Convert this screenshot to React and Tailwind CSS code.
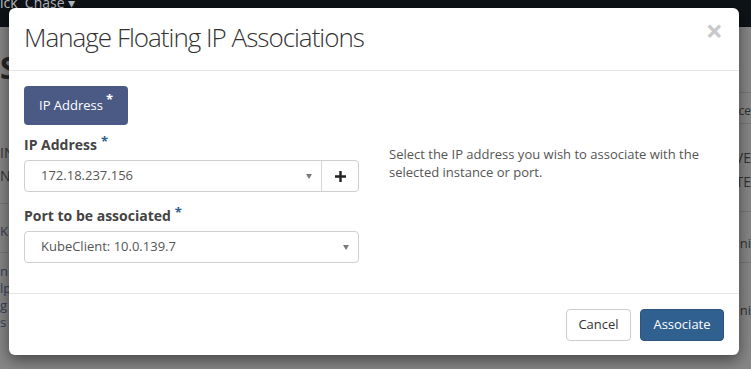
import React from "react";

const Req = ({ light }) => (
  <span
    className={`ml-[4px] inline-block align-top text-[13px] font-bold leading-[12px] ${
      light ? "text-white" : "text-[#2a5f8f]"
    }`}
  >
    *
  </span>
);

const Caret = () => (
  <svg width="6" height="5" viewBox="0 0 6 5" className="shrink-0">
    <path d="M0 0h6L3 5z" fill="#7a7a7a" />
  </svg>
);

const Select = ({ value, addon }) => (
  <div className="flex h-[32px] w-full rounded-[4px] border border-[#cfcfcf] bg-white">
    <div className="flex flex-1 items-center justify-between pl-[16px] pr-[9px] text-[13px] text-[#555]">
      <span>{value}</span>
      <Caret />
    </div>
    {addon && (
      <div className="flex w-[37px] items-center justify-center border-l border-[#d6d6d6]">
        <svg width="11" height="11" viewBox="0 0 11 11">
          <path d="M4.3 0h2.4v4.3H11v2.4H6.7V11H4.3V6.7H0V4.3h4.3z" fill="#222" />
        </svg>
      </div>
    )}
  </div>
);

const Field = ({ label, children, className = "" }) => (
  <div className={className}>
    <div className="mb-[5px] h-[20px] text-[14px] font-bold leading-[20px] text-[#444]">
      {label}
      <Req />
    </div>
    {children}
  </div>
);

const App = () => {
  return (
    <div className="relative h-[369px] w-[751px] overflow-hidden bg-[#878787] font-['Open_Sans',sans-serif]">
      {/* page behind the backdrop */}
      <div className="flex h-[27px] items-start bg-[#0e1317] text-[14px] leading-[12px] text-[#b8bcc2]">
        <span className="-mt-[3px]">ick&nbsp; Chase ▾</span>
      </div>
      <div className="flex h-[342px] justify-between text-[#2e2e33]">
        <div className="w-[9px] overflow-hidden whitespace-nowrap">
          <div className="mt-[26px] text-[30px] font-bold leading-[30px] text-[#262626]">S</div>
          <div className="mt-[58px] text-[14px] leading-[23px] text-[#333]">IN</div>
          <div className="text-[14px] leading-[23px] text-[#333]">N</div>
          <div className="mt-[16px] border-t border-[#777]" />
          <div className="mt-[18px] text-[13px] leading-[18px] text-[#34405a]">K</div>
          <div className="mt-[12px] border-t border-[#777]" />
          <div className="mt-[10px] text-[13px] leading-[17px] text-[#34405a]">n</div>
          <div className="text-[13px] leading-[17px] text-[#34405a]">lp</div>
          <div className="text-[13px] leading-[17px] text-[#34405a]">g</div>
          <div className="text-[13px] leading-[17px] text-[#34405a]">s</div>
        </div>
        <div className="flex w-[12px] flex-col items-end overflow-hidden whitespace-nowrap">
          <div className="mt-[65px] w-full border-t border-[#777]" />
          <div className="mt-[9px] text-[12px] leading-[18px] text-[#333]">nce</div>
          <div className="mt-[3px] w-full border-t border-[#777]" />
          <div className="mt-[22px] text-[14px] leading-[24px] text-[#333]">VE</div>
          <div className="text-[14px] leading-[24px] text-[#333]">TE</div>
          <div className="mt-[17px] w-full border-t border-[#777]" />
          <div className="mt-[22px] text-[13px] leading-[18px] text-[#333]">ni</div>
          <div className="mt-[10px] w-full border-t border-[#777]" />
          <div className="mt-[38px] text-[13px] leading-[18px] text-[#333]">ni</div>
        </div>
      </div>

      {/* modal dialog */}
      <div className="absolute left-[9px] top-[8px] flex h-[347px] w-[730px] flex-col rounded-[6px] bg-white shadow-[0_5px_15px_rgba(0,0,0,0.5)]">
        <div className="flex h-[63px] items-center justify-between border-b border-[#e5e5e5] px-[15px]">
          <h4 className="-mt-[3px] text-[26px] font-light tracking-[-1px] text-[#333]">
            Manage Floating IP Associations
          </h4>
          <span className="-mt-[17px] mr-[1px] text-[30px] font-bold leading-none text-[#c8c8c8]">
            ×
          </span>
        </div>

        <div className="flex-1 px-[15px] pt-[15px]">
          <div className="inline-flex h-[39px] w-[104px] items-center rounded-[4px] bg-[#4a5a85] pl-[15px] text-[13px] text-white">
            IP Address
            <span className="-mt-[12px] ml-[3px] text-[13px] font-bold leading-none">*</span>
          </div>

          <div className="mt-[10px] grid grid-cols-2 gap-[30px]">
            <div>
              <Field label="IP Address">
                <Select value="172.18.237.156" addon />
              </Field>
              <Field label="Port to be associated" className="mt-[14px]">
                <Select value="KubeClient: 10.0.139.7" />
              </Field>
            </div>
            <p className="mt-[10px] text-[13px] leading-[18px] text-[#555]">
              Select the IP address you wish to associate with the selected
              instance or port.
            </p>
          </div>
        </div>

        <div className="flex h-[62px] items-center justify-end gap-[9px] border-t border-[#e5e5e5] px-[15px]">
          <button className="h-[32px] w-[65px] rounded-[4px] border border-[#cccccc] bg-white text-[13px] text-[#333]">
            Cancel
          </button>
          <button className="h-[32px] w-[84px] rounded-[4px] border border-[#2b5580] bg-[#30608f] text-[13px] text-white">
            Associate
          </button>
        </div>
      </div>
    </div>
  );
};

export default App;
